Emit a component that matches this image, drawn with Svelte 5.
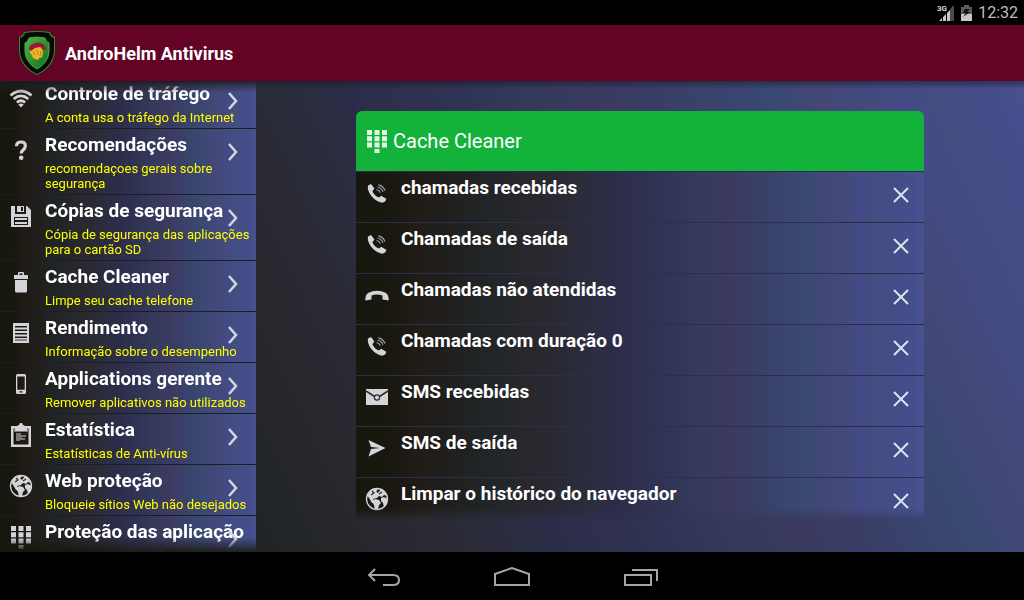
<script>
	import { onMount } from "svelte";

	const menu = [
		{ icon: "wifi", title: "Controle de tráfego", text: "A conta usa o tráfego da Internet" },
		{ icon: "help", title: "Recomendações", text: "recomendaçoes gerais sobre segurança" },
		{ icon: "save", title: "Cópias de segurança", text: "Cópia de segurança das aplicações para o cartão SD" },
		{ icon: "trash", title: "Cache Cleaner", text: "Limpe seu cache telefone" },
		{ icon: "list", title: "Rendimento", text: "Informação sobre o desempenho" },
		{ icon: "phone", title: "Applications gerente", text: "Remover aplicativos não utilizados" },
		{ icon: "clipboard", title: "Estatística", text: "Estatísticas de Anti-vírus" },
		{ icon: "globe", title: "Web proteção", text: "Bloqueie sítios Web não desejados" },
		{ icon: "keypad", title: "Proteção das aplicação", text: "Bloqueio da aplicação" }
	];

	let items = $state([
		{ icon: "call", title: "chamadas recebidas" },
		{ icon: "call", title: "Chamadas de saída" },
		{ icon: "missed", title: "Chamadas não atendidas" },
		{ icon: "call", title: "Chamadas com duração 0" },
		{ icon: "mail", title: "SMS recebidas" },
		{ icon: "send", title: "SMS de saída" },
		{ icon: "globe", title: "Limpar o histórico do navegador" }
	]);

	let sidebar;

	onMount(() => {
		sidebar.scrollTop = 3;
	});

	function clearItem(item) {
		items = items.filter((i) => i !== item);
	}
</script>

{#snippet icon(name)}
	<svg class="icon" viewBox="0 0 24 24" aria-hidden="true">
		{#if name === "wifi"}
			<g fill="none" stroke="#d4d4d8" stroke-width="2.8">
				<path d="M1.500 8.500Q12-.5 22.500 8.500" />
				<path d="M4.700 12Q12 5.800 19.300 12" />
				<path d="M7.900 15.500Q12 12 16.100 15.500" />
			</g>
			<path d="M9.300 17.500Q12 15.500 14.700 17.500L12 20.500z" />
		{:else if name === "help"}
			<path d="M7.500 8.200Q7.500 4 12 4T16.300 8Q16.300 10 14.300 11.700T12.200 15.500" fill="none" stroke="#d4d4d8" stroke-width="3.200" />
			<circle cx="12.200" cy="19.800" r="2.300" />
		{:else if name === "save"}
			<path d="M2 2h4v8h11V2h1l4 4v17H2zM5 13v8h14v-8z" fill-rule="evenodd" />
			<path d="M8 2h7v6H8zm4 1v4h2V3z" fill-rule="evenodd" />
			<path d="M6 14h12v2H6zM6 18h12v2H6z" />
		{:else if name === "trash"}
			<path d="M5 5h4V3q0-1 1-1h4q1 0 1 1v2h3q1 0 1 1v3H5zM10.500 3.500V5h3V3.500zM6 10h12v11q0 1.500-1.500 1.500h-9Q6 22.500 6 21z" fill-rule="evenodd" />
		{:else if name === "list"}
			<path d="M4 2h16v20H4zM6 5v1.500h12V5zm0 3.500V10h12V8.500zM6 12v1.500h12V12zm0 3.500V17h12v-1.500z" fill-rule="evenodd" />
			<path d="M6 19h12" stroke="#33343c" />
		{:else if name === "phone"}
			<path d="M8.500 2h7Q17 2 17 3.500v17q0 1.500-1.500 1.500h-7Q7 22 7 20.500v-17Q7 2 8.500 2zM8.300 4.500v13.300h7.400V4.500zm2.200 14.800v1.200h3v-1.200z" fill-rule="evenodd" />
		{:else if name === "clipboard"}
			<path d="M2 3h6l2-1 1-2h2l1 2 2 1h6v21H2zM4.500 5.500v16h15v-16H18l1 3H5l1-3z" fill-rule="evenodd" />
			<path d="M7 10h5v2h5v2h-4v1h3v2h-5v1H7z" opacity="0.5" />
		{:else if name === "globe"}
			<circle cx="12" cy="12" r="10.500" fill="none" stroke="#d4d4d8" stroke-width="1.300" />
			<path d="M2 8L6 3l5-2 2 2-2 1 2 2 3-4 3 2 3 5-3-1-2 2-3-1-2 2-4 1 2 3-3 1-3-5zM10 12l4 1 2 3-2 2-1 4-3 1-1-5-2-3zM16 11l3-1 4 2-1 5-3 3-1-4-2-2z" />
			<path d="M7 4l2 2-3 2M14 7l3-2" stroke="#26262b" fill="none" stroke-width="1.200" />
		{:else if name === "keypad"}
			<path d="M2 1h5v5H2zM9.500 1h5v5h-5zM17 1h5v5h-5zM2 7.300h5v5H2zM9.500 7.300h5v5h-5zM17 7.300h5v5h-5zM2 13.600h5v5H2zM9.500 13.600h5v5h-5zM17 13.600h5v5h-5zM9.500 19.900h5V24h-5z" />
		{:else if name === "call"}
			<path d="M3 4.500L6 3l3.400 4.600-2 2.600Q9 14.500 14 16.600l2.100-1.800 5.200 3q-.500 3.600-4.300 4Q10.500 20.500 6 14.500 2 9 3 4.500z" />
			<path d="M11.500 8.500q3 .500 3.800 3.200M12.500 6q4 .800 5.500 4.700M13.500 3.800q4.500 1 6.500 5.700" fill="none" stroke="#a2a4ac" stroke-width="1.200" />
		{:else if name === "missed"}
			<path d="M.500 17.500Q-.500 12.500 3 10 12 5.500 21 10 24.500 12.500 23.500 17.500L17.500 16.500V12.500Q12 10.500 6.500 12.500v4z" />
		{:else if name === "mail"}
			<path d="M1 4h22v16H1z" />
			<path d="M1 6l8.500 5.500M23 6L14.500 11.500" stroke="#302d32" stroke-width="1.500" />
			<circle cx="12" cy="12.500" r="2.600" fill="none" stroke="#302d32" stroke-width="1.200" />
		{:else if name === "send"}
			<path d="M3.500 4L20.500 12 3.500 20.500 6 13l9-1-9-1z" />
		{/if}
	</svg>
{/snippet}

<div class="screen">
	<div class="status-bar">
		<svg class="signal" viewBox="0 0 16 17" aria-hidden="true">
			<path d="M16 1v16h-4V5z" fill="#4b4b4b" />
			<path d="M1 17h3v-3zM5 17h3v-7l-3 3zM9 17h3V6l-3 3z" fill="#c8c8c8" />
			<text x="4" y="7">3G</text>
		</svg>
		<svg class="battery" viewBox="0 0 11 16" aria-hidden="true">
			<path d="M0 2h3V0h5v2h3v7H0z" fill="#5c5c5c" />
			<path d="M0 9h11v7H0z" fill="#c8c8c8" />
			<path d="M9 4H4L2 8h3l-3 4 7-5H6z" fill="#111" />
		</svg>
		<span class="clock">12:32</span>
	</div>

	<header class="app-bar">
		<svg class="logo" viewBox="0 0 38 44" aria-hidden="true">
			<defs>
				<linearGradient id="shield" x2="1" y2="1">
					<stop offset="0" stop-color="#4fb548" />
					<stop offset="1" stop-color="#12701b" />
				</linearGradient>
			</defs>
			<path d="M6 1Q19-1 32 1q1 4 5 5v14Q36 36 19 44 2 36 1 20V6q4-1 5-5z" fill="#2f8b2e" />
			<path d="M7 2Q19 0 31 2q1 4 5 5v13Q35 35 19 43 3 35 2 20V7q4-1 5-5z" fill="#050a05" />
			<path d="M11 7Q19 5 27 7q1 4 4 5v9Q30 32 19 38 8 32 7 21v-9q3-1 4-5z" fill="url(#shield)" stroke="#4fae49" />
			<path d="M12 19l4-3h7l2 5-1 5-3 1-1 2-3-1-2-1-1-3-2-2v-3z" fill="#efb529" />
			<path d="M11 18q0-4 4-5 6-3 10 0 3 2 3 6l-3-1-3-2-5 1-4 3z" fill="#9d1739" />
			<path d="M15 20l2 4M19 19l1 5M23 20l-1 5" stroke="#c87c19" />
		</svg>
		<h1>AndroHelm Antivirus</h1>
	</header>

	<div class="content">
		<nav class="sidebar" bind:this={sidebar}>
			{#each menu as item}
				<button class="menu-item">
					{@render icon(item.icon)}
					<span class="labels">
						<span class="title">{item.title}</span>
						<span class="text">{item.text}</span>
					</span>
					<svg class="chevron" viewBox="0 0 10 18" aria-hidden="true">
						<path d="M1 1l7 8-7 8" />
					</svg>
				</button>
			{/each}
		</nav>

		<main>
			<h2 class="card-header">
				{@render icon("keypad")}
				Cache Cleaner
			</h2>
			<ul class="card-list">
				{#each items as item}
					<li>
						{@render icon(item.icon)}
						<span class="title">{item.title}</span>
						<button class="clear-btn" aria-label={`Limpar ${item.title}`} onclick={() => clearItem(item)}>
							<svg viewBox="0 0 16 16" aria-hidden="true">
								<path d="M1 1l14 14M15 1L1 15" />
							</svg>
						</button>
					</li>
				{/each}
			</ul>
		</main>
	</div>

	<!-- Botoes do sistema -->
	<footer class="nav-bar">
		<button aria-label="Voltar">
			<svg viewBox="0 0 36 20"><path d="M10 3L4 9l6 6M4 9h24q6 0 6 5t-6 5H18" /></svg>
		</button>
		<button aria-label="Início">
			<svg viewBox="0 0 36 20"><path d="M1 8L18 2l17 6v11H1z" /></svg>
		</button>
		<button aria-label="Recentes">
			<svg viewBox="0 0 36 20"><path d="M2 9h26v10H2zM9 4h25v11" /></svg>
		</button>
	</footer>
</div>

<style>
	:global(body) {
		margin: 0;
		background: #000;
	}

	.screen {
		display: flex;
		flex-direction: column;
		height: 100vh;
		background: #000;
		color: #fff;
		font-family: Roboto, "Noto Sans", sans-serif;
		--stripes: #17170f 0%, #19180f 6%, #211c18 11%, #20201f 17%, #212527 23%, #28272d 30%, #2a2a34 36%,
			#2b2d3e 41%, #2b2d48 45%, #2f2f4e 49%, #303455 55%, #353a5a 60%, #3b3a60 65%, #3a3e66 70%,
			#39436c 74%, #394972 79%, #434777 83%, #434a7b 86%, #444a85 89%, #434e82 92%, #434e8b 97%,
			#4b5190 100%;
	}

	button {
		margin: 0;
		padding: 0;
		border: none;
		background: none;
		color: inherit;
		font: inherit;
		cursor: pointer;
	}

	/* Barra de status */
	.status-bar {
		display: flex;
		align-items: center;
		justify-content: flex-end;
		height: 25px;
		padding-right: 6px;
		color: #bdbdbd;
		font-size: 16px;
	}

	.signal {
		width: 16px;
		height: 17px;
		margin-right: 7px;
		overflow: visible;
	}

	.signal text {
		fill: #d8d8d8;
		font-size: 8px;
		font-weight: bold;
		text-anchor: middle;
	}

	.battery {
		width: 11px;
		height: 16px;
		margin-right: 6px;
	}

	/* Cabecalho do aplicativo */
	.app-bar {
		display: flex;
		align-items: center;
		gap: 9px;
		height: 56px;
		padding-left: 18px;
		background: #630427;
	}

	.logo {
		width: 38px;
		height: 44px;
	}

	h1 {
		margin: 0;
		font-size: 18px;
		font-weight: bold;
	}

	.content {
		flex: 1;
		display: flex;
		min-height: 0;
		background:
			linear-gradient(rgba(20, 20, 35, 0.5), transparent 8px),
			linear-gradient(65deg, var(--stripes));
	}

	.icon {
		flex: none;
		width: 24px;
		height: 24px;
		fill: #d4d4d8;
	}

	.title {
		font-size: 19px;
		font-weight: bold;
		line-height: 24px;
		white-space: nowrap;
	}

	/* Menu lateral */
	.sidebar {
		flex: none;
		width: 25%;
		overflow-y: auto;
		scrollbar-width: none;
		mask-image: linear-gradient(transparent, #000 12px, #000 calc(100% - 14px), transparent);
	}

	.menu-item {
		position: relative;
		display: flex;
		gap: 12px;
		width: 100%;
		padding: 4px 4px 3px 9px;
		border-bottom: 1px solid #1d1d26;
		background: linear-gradient(90deg, var(--stripes));
		text-align: left;
	}

	.menu-item .icon {
		margin-top: 5px;
	}

	.labels {
		display: flex;
		flex-direction: column;
		gap: 4px;
		min-width: 0;
	}

	.text {
		color: #ff0;
		font-size: 13px;
		line-height: 15px;
	}

	.chevron {
		position: absolute;
		top: 14px;
		right: 18px;
		width: 10px;
		height: 18px;
	}

	.chevron path {
		fill: none;
		stroke: #d4d6e2;
		stroke-width: 2.5;
	}

	/* Painel principal */
	main {
		flex: 1;
		display: flex;
		flex-direction: column;
		min-width: 0;
		padding: 30px 100px 32px;
	}

	.card-header {
		flex: none;
		display: flex;
		align-items: center;
		gap: 4px;
		height: 60px;
		margin: 0;
		padding-left: 9px;
		border-radius: 6px 6px 0 0;
		background: #12b23b;
		font-size: 20px;
		font-weight: normal;
	}

	.card-header .icon {
		height: 26px;
		fill: #e2f8e4;
	}

	.card-list {
		flex: 1;
		min-height: 0;
		margin: 0;
		padding: 0;
		overflow-y: auto;
		scrollbar-width: none;
		list-style: none;
		mask-image: linear-gradient(#000 calc(100% - 12px), transparent);
	}

	.card-list li {
		display: flex;
		align-items: flex-start;
		gap: 12px;
		height: 50px;
		padding-left: 9px;
		border-top: 1px solid #2c2e4c;
		background: linear-gradient(90deg, var(--stripes));
	}

	.card-list .icon {
		margin-top: 9px;
	}

	.card-list .title {
		flex: 1;
		padding-top: 4px;
	}

	.clear-btn {
		width: 46px;
		height: 46px;
	}

	.clear-btn svg {
		display: block;
		width: 16px;
		height: 16px;
		margin: auto;
	}

	.clear-btn path {
		stroke: #dfe1ee;
		stroke-width: 2;
	}

	/* Barra de navegacao */
	.nav-bar {
		display: flex;
		justify-content: center;
		height: 48px;
	}

	.nav-bar button {
		width: 129px;
	}

	.nav-bar svg {
		display: block;
		width: 36px;
		height: 20px;
		margin: auto;
		fill: none;
		stroke: #a6a6a6;
		stroke-width: 2;
	}
</style>
